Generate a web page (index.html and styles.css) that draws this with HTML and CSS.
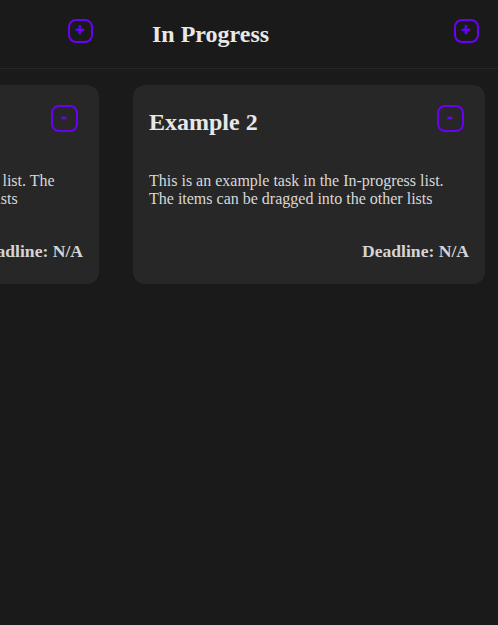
FILE: index.html
```html
<!DOCTYPE html>
<html lang="en">
<head>
<meta charset="utf-8">
<title>Task board</title>
<link rel="stylesheet" href="styles.css">
</head>
<body>
<main class="board">
  <section class="column">
    <header class="column-header">
      <h1 class="column-title">To Do</h1>
      <button class="icon-button add-button">+</button>
    </header>
    <div class="column-body">
      <article class="card">
        <div class="card-top">
          <h2 class="card-title">Example 1</h2>
          <button class="icon-button remove-button">-</button>
        </div>
        <p class="card-text">This is an example task in the To-Do list. The items can be dragged into the other lists</p>
        <p class="card-deadline">Deadline: N/A</p>
      </article>
    </div>
  </section>
  <section class="column">
    <header class="column-header">
      <h1 class="column-title">In Progress</h1>
      <button class="icon-button add-button">+</button>
    </header>
    <div class="column-body">
      <article class="card">
        <div class="card-top">
          <h2 class="card-title">Example 2</h2>
          <button class="icon-button remove-button">-</button>
        </div>
        <p class="card-text">This is an example task in the In-progress list. The items can be dragged into the other lists</p>
        <p class="card-deadline">Deadline: N/A</p>
      </article>
    </div>
  </section>
</main>
</body>
</html>
```
FILE: styles.css
```css
* { box-sizing: border-box; }
html, body { margin: 0; height: 100%; overflow: hidden; background: #1a1a1a; }
body { font-family: "Liberation Serif", "Times New Roman", serif; color: #e0e0e0; }
.board { display: flex; justify-content: flex-end; width: 502px; height: 625px; }
.column { flex: 0 0 386px; }
.column-header {
  display: flex; align-items: center; justify-content: space-between;
  height: 69px; padding: 0 23px 6px 36px;
  border-bottom: 1px solid #272727;
}
.column-title { margin: 6px 0 0; font-size: 24px; font-weight: 700; color: #e8e8e8; }
.column-body { padding: 16px 17px; }
.card { height: 199px; padding: 20px 16px 0; background: #272727; border-radius: 12px; }
.card-top { display: flex; align-items: center; justify-content: space-between; height: 27px; margin-bottom: 40px; }
.card-title { margin: 7px 0 0; font-size: 24px; font-weight: 700; color: #e8e8e8; }
.icon-button {
  padding: 0 1px 3px 0; background: transparent; border: 2px solid #6a00f4; border-radius: 8px;
  color: #6f00ff; font-family: "Liberation Sans", Arial, sans-serif; font-weight: 700; font-size: 16px; line-height: 1;
  -webkit-text-stroke: 0.4px #6f00ff;
  display: flex; align-items: center; justify-content: center;
}
.add-button { width: 25px; height: 24px; }
.remove-button { width: 27px; height: 27px; margin-right: 5px; }
.card-text { margin: 0; font-size: 16px; line-height: 18px; color: #d8d8d8; }
.card-deadline { margin: 33px 0 0; text-align: right; font-size: 17.6px; font-weight: 700; color: #d4d4d4; }
```
